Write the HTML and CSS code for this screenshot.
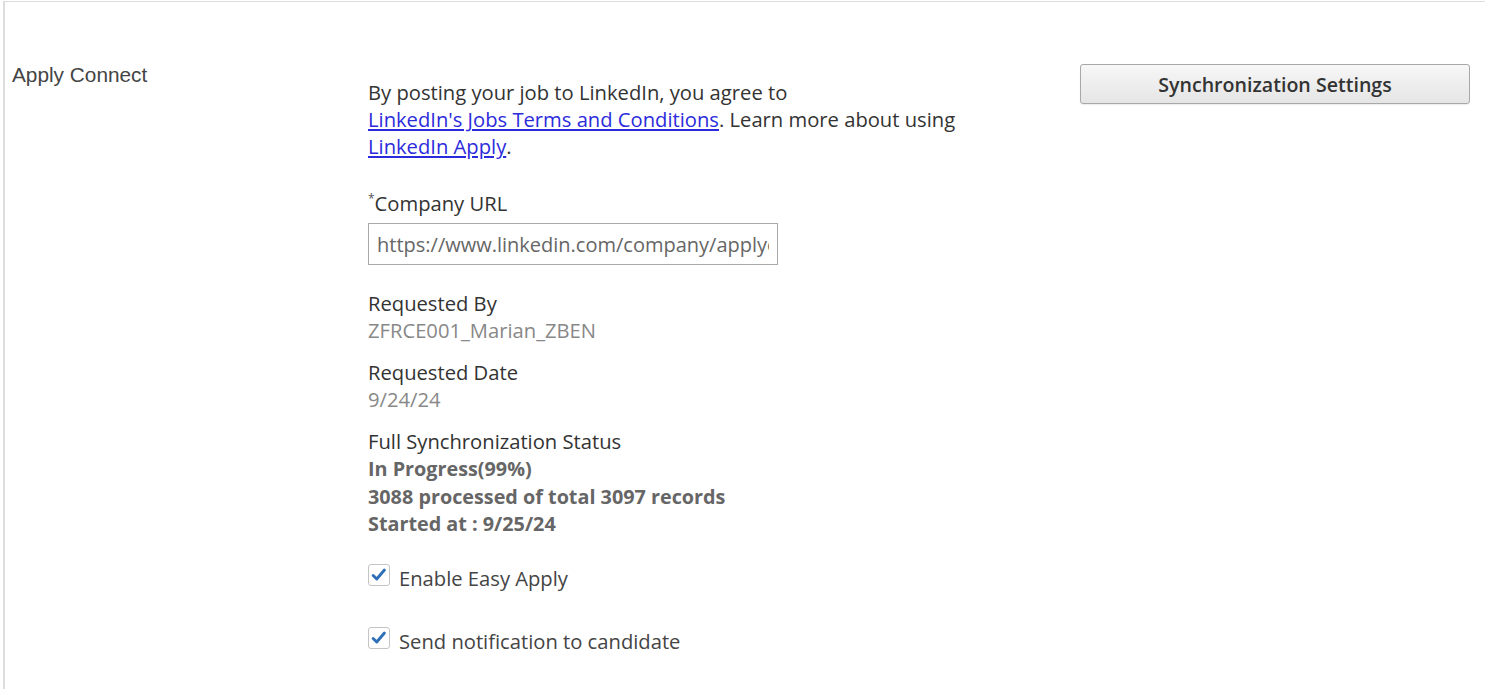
FILE: index.html
```html
<!DOCTYPE html>
<html>
<head>
  <link rel="stylesheet" href="styles.css">
</head>
<body>
  <div class="panel">
    <div class="row">
      <div class="row-label">Apply Connect</div>

      <div class="row-body">
        <p class="terms">
          By posting your job to LinkedIn, you agree to<br>
          <a href="#">LinkedIn's Jobs Terms and Conditions</a>. Learn more about using<br>
          <a href="#">LinkedIn Apply</a>.
        </p>

        <div class="field">
          <label class="field-label" for="companyUrl"><span class="req">*</span>Company URL</label>
          <input class="text-input" id="companyUrl" type="text" value="https://www.linkedin.com/company/applyconnect">
        </div>

        <div class="info">
          <div class="info-label">Requested By</div>
          <div class="info-value">ZFRCE001_Marian_ZBEN</div>
        </div>

        <div class="info">
          <div class="info-label">Requested Date</div>
          <div class="info-value">9/24/24</div>
        </div>

        <div class="info">
          <div class="info-label">Full Synchronization Status</div>
          <div class="status">In Progress(99%)</div>
          <div class="status">3088 processed of total 3097 records</div>
          <div class="status">Started at : 9/25/24</div>
        </div>

        <label class="check">
          <span class="check-box">
            <svg viewBox="0 0 20 20" width="18" height="18"><path d="M3.5 10.5 L7.5 14.5 L16 4.5" fill="none" stroke="#2f6fb8" stroke-width="3.2" stroke-linecap="round" stroke-linejoin="round"/></svg>
          </span>
          Enable Easy Apply
        </label>

        <label class="check">
          <span class="check-box">
            <svg viewBox="0 0 20 20" width="18" height="18"><path d="M3.5 10.5 L7.5 14.5 L16 4.5" fill="none" stroke="#2f6fb8" stroke-width="3.2" stroke-linecap="round" stroke-linejoin="round"/></svg>
          </span>
          Send notification to candidate
        </label>
      </div>

      <div class="row-actions">
        <button class="btn">Synchronization Settings</button>
      </div>
    </div>
  </div>
</body>
</html>
```

FILE: styles.css
```css
body {
  margin: 0;
  padding: 0;
  background: #fff;
  font-family: "Open Sans", "Noto Sans", sans-serif;
  color: #333;
}

.panel {
  margin: 1px 0 0 3px;
  border-top: 1px solid #ddd;
  border-left: 2px solid #ddd;
  padding: 62px 0 40px 7px;
  min-height: 600px;
}

.row {
  display: grid;
  grid-template-columns: 356px 712px 390px;
}

.row-label {
  font-family: "Liberation Sans", Arial, sans-serif;
  font-size: 20.8px;
  line-height: 22px;
  color: #444;
}

.row-body {
  padding-top: 15px;
  font-size: 20.2px;
  line-height: 27px;
}

.terms {
  margin: 0 0 30px 0;
}

.terms a {
  color: #2b2bdc;
  text-decoration: underline;
}

.field {
  margin-bottom: 25px;
}

.field-label {
  display: block;
  margin-bottom: 6px;
}

.req {
  font-size: 12px;
  vertical-align: top;
  line-height: 18px;
  color: #555;
}

.text-input {
  box-sizing: border-box;
  width: 410px;
  height: 42px;
  padding: 0 8px;
  border: 1px solid #a9a9a9;
  border-radius: 0;
  font-family: inherit;
  font-size: 20px;
  color: #666;
}

.info {
  margin-bottom: 15px;
}

.info-value {
  color: #888;
}

.status {
  font-weight: 700;
  color: #666;
  font-size: 19.8px;
  line-height: 27.5px;
}

.check {
  display: flex;
  align-items: center;
  gap: 9px;
  height: 27px;
  margin-top: 27px;
  color: #444;
}

.check + .check {
  margin-top: 36px;
}

.check-box {
  box-sizing: border-box;
  width: 22px;
  height: 22px;
  margin-top: -6px;
  border: 1px solid #c4c4c4;
  border-radius: 3px;
  display: flex;
  align-items: center;
  justify-content: center;
  background: #fff;
}

.row-actions {
  display: flex;
  align-items: flex-start;
}

.btn {
  width: 390px;
  height: 40px;
  border: 1px solid #a8a8a8;
  border-radius: 3px;
  background: linear-gradient(#f7f7f7, #e5e5e5);
  font-family: "Open Sans", "Noto Sans", sans-serif;
  font-size: 19.6px;
  font-weight: 600;
  color: #333;
  box-shadow: 0 1px 1px rgba(0, 0, 0, 0.08);
}
```
